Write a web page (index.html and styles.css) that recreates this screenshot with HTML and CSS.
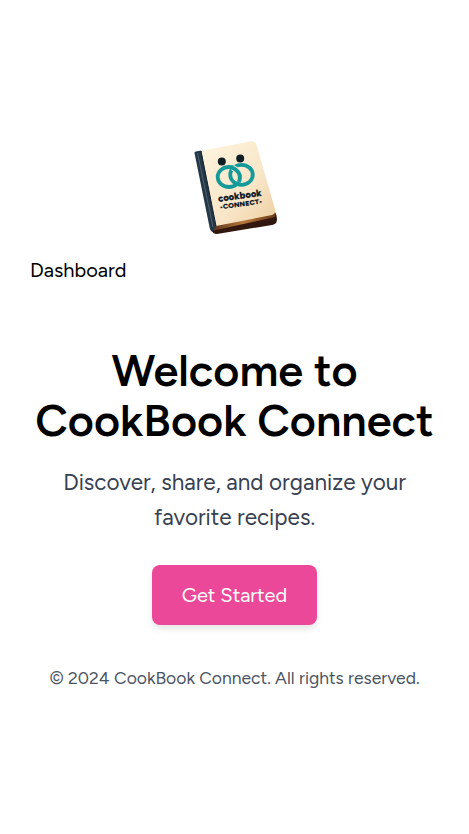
FILE: index.html
```html
<!DOCTYPE html>
<html lang="en">
<head>
<meta charset="utf-8">
<title>CookBook Connect</title>
<link rel="stylesheet" href="styles.css">
</head>
<body>
<header class="header">
<svg class="logo" viewBox="0 0 100 115" role="img" aria-label="CookBook Connect">
  <defs>
    <linearGradient id="cover" x1="0" y1="0" x2="1" y2="1"><stop offset="0" stop-color="#fff5df"/><stop offset=".6" stop-color="#f8e6c8"/><stop offset="1" stop-color="#edcfa1"/></linearGradient>
    <linearGradient id="pages"><stop offset="0" stop-color="#54301b"/><stop offset=".5" stop-color="#b6773a"/><stop offset="1" stop-color="#6e3c1b"/></linearGradient>
  </defs>
  <path d="M26 98 90 82Q93 87 91.500 92Q91 94 87 95L32 104Q28 104 27 101Z" fill="#32170e"/>
  <path d="M27 95 89 80Q91 83 90 87L31 100Q27 101 26 97Z" fill="url(#pages)"/>
  <path d="M15 21 65 11.500Q70 10.500 71.500 15L90 79Q91 84 87 85L31 96Z" fill="url(#cover)"/>
  <path d="M9.500 23Q9 21.500 11 21.500L16 20.500 31 96 27.500 102Q25 101 24.500 97Z" fill="#243747"/>
  <path d="M12.500 23 28 97" stroke="#50616d" stroke-width="1" fill="none"/>
  <path d="M16 21 31 96" stroke="#14232d" stroke-width="1" fill="none"/>
  <circle cx="36.800" cy="31.500" r="4" fill="#111d24"/>
  <circle cx="55.200" cy="28.600" r="4" fill="#111d24"/>
  <g fill="none" stroke="#159a9a" stroke-width="3.800">
    <ellipse cx="44" cy="47" rx="11.300" ry="10"/>
    <ellipse cx="56.500" cy="44.800" rx="11.300" ry="10"/>
    <path d="M47.500 37.500Q58 43 54 52" stroke="#fbedd3" stroke-width="5.500"/>
    <path d="M46 37Q58 42 54 52"/>
  </g>
  <text class="logo-name" transform="translate(33.500 72) rotate(-8)" textLength="44" lengthAdjust="spacingAndGlyphs">cookbook</text>
  <text class="logo-sub" transform="translate(35 79.500) rotate(-8)" textLength="43" lengthAdjust="spacingAndGlyphs">•CONNECT•</text>
</svg>
</header>
<nav class="nav"><a class="nav-link">Dashboard</a></nav>
<main class="hero">
  <h1 class="title"><span class="line">Welcome to</span> <span class="line">CookBook Connect</span></h1>
  <p class="lead">Discover, share, and organize your favorite recipes.</p>
  <a class="button">Get Started</a>
</main>
<footer class="footer">© 2024 CookBook Connect. All rights reserved.</footer>
</body>
</html>
```
FILE: styles.css
```css
* { box-sizing: border-box; }
body {
  margin: 0;
  min-height: 834px;
  padding: 130px 30px 0;
  background: #fff;
  color: #000;
  font-family: Figtree, Lato, "Liberation Sans", sans-serif;
}
.header { display: flex; justify-content: center; height: 115px; }
.logo { width: 100px; height: 115px; }
.logo-name { font: 900 10px Figtree, Lato, sans-serif; fill: #13212a; }
.logo-sub { font: 900 6.8px Figtree, Lato, sans-serif; fill: #13212a; }
.nav { padding-top: 10px; font-size: 20px; line-height: 30px; }
.hero { display: flex; flex-direction: column; align-items: center; padding-top: 60px; text-align: center; }
.title { margin: 0; font-size: 45px; line-height: 50px; font-weight: 600; white-space: nowrap; }
.line { display: block; }
.lead { margin: 20px 0 0; width: 370px; color: #374151; font-size: 22.5px; line-height: 35px; }
.button {
  margin-top: 30px;
  width: 165px;
  height: 60px;
  border-radius: 8px;
  background: #ec4899;
  color: #fff;
  font-size: 20px;
  line-height: 60px;
  box-shadow: 0 4px 6px rgb(0 0 0 / 10%);
}
.footer { margin-top: 40px; color: #4b5563; text-align: center; font-size: 17.5px; line-height: 25px; white-space: nowrap; }
```
